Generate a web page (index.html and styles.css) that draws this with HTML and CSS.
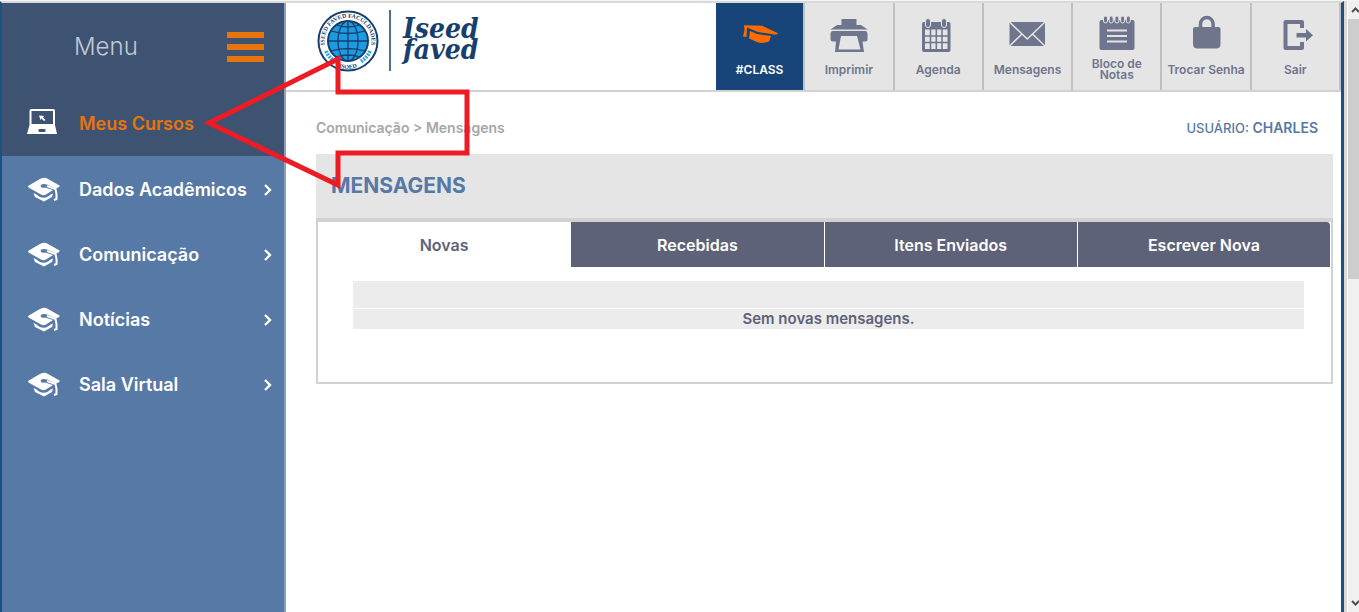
FILE: index.html
```
<!DOCTYPE html>
<html lang="pt-BR">
<head>
<meta charset="utf-8">
<title>Mensagens</title>
<link rel="stylesheet" href="styles.css">
</head>
<body>
<svg class="defs" aria-hidden="true">
  <symbol id="cap" viewBox="0 0 34 28">
    <path d="M1 10 12 3.500Q17 0.500 21 3L32.500 9.500Q33 10.500 32 11L29.500 12.500 20 8.500Q14 7 13.500 10Q14 12.500 18 11.500L26 14 19 18.500Q16.500 20 14 18.500L1.500 11.500Z" fill="#fff"/>
    <path d="M6.500 17Q9 17.500 12 20.500Q17 23 21 20.500Q24 18 26 17.500L25 21 17 25.500 8 21Z" fill="#fff"/>
    <path d="M20 10 28.500 13Q30 18 29.500 23L27 24" fill="none" stroke="#fff" stroke-width="2"/>
  </symbol>
  <symbol id="chevron" viewBox="0 0 10 14"><path d="M2 2 7 7 2 12" fill="none" stroke="#fff" stroke-width="2.400"/></symbol>
</svg>
<div class="window">
  <div class="app">
    <aside class="sidebar">
      <div class="sidebar-top">
        <div class="menu-head">
          <span>Menu</span>
          <button class="burger" aria-label="Abrir menu"><i></i><i></i><i></i></button>
        </div>
        <a class="item active" href="#">
          <svg class="item-icon" viewBox="0 0 34 28"><path d="M4.500 0H26.500Q28 0 28 2V16L30 25H0L2.500 16V2Q2.500 0 4.500 0Z" fill="#fff"/><path d="M4.500 2H26V15H4.500Z" fill="#3e5371"/><path d="M12 6.500 17 7 16 8.500 18.500 11 17 12 14.500 9.500 13.500 11Z" fill="#fff"/><rect x="11.500" y="20" width="7" height="3" rx="1" fill="#3e5371"/></svg>
          <span>Meus Cursos</span>
        </a>
      </div>
      <nav class="sidebar-nav">
        <a class="item" href="#"><svg class="item-icon"><use href="#cap"/></svg><span>Dados Acadêmicos</span><svg class="chevron"><use href="#chevron"/></svg></a>
        <a class="item" href="#"><svg class="item-icon"><use href="#cap"/></svg><span>Comunicação</span><svg class="chevron"><use href="#chevron"/></svg></a>
        <a class="item" href="#"><svg class="item-icon"><use href="#cap"/></svg><span>Notícias</span><svg class="chevron"><use href="#chevron"/></svg></a>
        <a class="item" href="#"><svg class="item-icon"><use href="#cap"/></svg><span>Sala Virtual</span><svg class="chevron"><use href="#chevron"/></svg></a>
      </nav>
    </aside>
    <main class="main">
      <header class="header">
        <svg class="logo" viewBox="0 0 170 66" role="img" aria-label="Iseed Faved">
          <circle cx="32" cy="33" r="29.500" fill="#fff" stroke="#173f6d" stroke-width="2"/>
          <circle cx="32" cy="33" r="20" fill="#1c9be0" stroke="#173f6d" stroke-width="2"/>
          <g fill="none" stroke="#173f6d" stroke-width="1.300"><ellipse cx="32" cy="33" rx="10" ry="20"/><path d="M32 13V53M12 33H52M15 23Q32 28 49 23M15 43Q32 38 49 43M20 17Q32 21 44 17M20 49Q32 45 44 49"/></g>
          <path id="arc-top" d="M9.500 40A23.500 23.500 0 1 1 54.500 40" fill="none"/>
          <path id="arc-bottom" d="M14 54A27 27 0 0 0 50 54" fill="none"/>
          <g class="seal-text"><text><textPath href="#arc-top" startOffset="50%">ISEED FAVED FACULDADES</textPath></text><text><textPath href="#arc-bottom" startOffset="50%">ISOED</textPath></text></g>
          <path d="M10 43Q13 50 20 54M54 43Q51 50 44 54" fill="none" stroke="#2eaade" stroke-width="4" stroke-dasharray="2 1"/>
          <path d="M74 2V63" stroke="#173f6d" stroke-width="1.500"/>
          <text class="logo-text"><tspan x="87" y="30">Iseed</tspan><tspan x="87" y="51">faved</tspan></text>
        </svg>
        <nav class="tools">
          <a class="tool current" href="#"><svg viewBox="0 0 44 44"><path d="M6 13.300 24 13.700 40 21.300 38 22.700 20 20 9 15.500 8.500 25 5 24.500 6.500 18Z" fill="#ff6b00"/><path d="M12 19 19 22 33 24 31 29.500Q24 32 19 30L11 26.500Z" fill="#ff6b00"/></svg><span>#CLASS</span></a>
          <a class="tool" href="#"><svg viewBox="0 0 44 44"><path d="M14.500 7H29.500V13H34L40.500 17.500H3.500L10 13H14.500Z"/><path d="M6 19H38Q40.500 19 40.500 22V27Q40.500 29.500 38 29.500H35.500L37 40H8L9 29.500H6Q3.500 29.500 3.500 27V22Q3.500 19 6 19ZM14 24 11.500 37.500H33.500L30 24Z" fill-rule="evenodd"/></svg><span>Imprimir</span></a>
          <a class="tool" href="#"><svg viewBox="0 0 44 44"><rect x="6" y="10" width="28.500" height="30" rx="2"/><path d="M9 17.500H31.500V37H9Z" fill="#e5e5e5"/><path d="M14.500 17V38M20.300 17V38M26 17V38M9 24H32M9 30.500H32" stroke="#6f758d" stroke-width="1.500"/><g stroke="#e5e5e5"><rect x="9.500" y="6.500" width="5" height="9" rx="2.500"/><rect x="25.500" y="6.500" width="5" height="9" rx="2.500"/></g></svg><span>Agenda</span></a>
          <a class="tool" href="#"><svg viewBox="0 0 44 44"><path d="M4.500 10H40V34H4.500Z"/><path d="M4.500 10 22.300 27 40 10M4.500 34 17 22M40 34 27.500 22" fill="none" stroke="#e5e5e5" stroke-width="1.500"/></svg><span>Mensagens</span></a>
          <a class="tool" href="#"><svg viewBox="0 0 44 44"><rect x="4.500" y="8" width="35" height="30" rx="2"/><g stroke="#e5e5e5"><rect x="8.500" y="4" width="4" height="7" rx="2"/><rect x="14.200" y="4" width="4" height="7" rx="2"/><rect x="19.900" y="4" width="4" height="7" rx="2"/><rect x="25.600" y="4" width="4" height="7" rx="2"/><rect x="31.300" y="4" width="4" height="7" rx="2"/></g><path d="M12 18.500H32M12 24H32M12 29.500H32" stroke="#e5e5e5" stroke-width="2"/></svg><span>Bloco de Notas</span></a>
          <a class="tool" href="#"><svg viewBox="0 0 44 44"><path d="M9 17Q9 15 11 15H34.500Q36.500 15 36.500 17V32Q36.500 36.500 32 36.500H13.500Q9 36.500 9 32Z"/><path d="M16.500 16V12A6.300 6.500 0 0 1 29.100 12V16" fill="none" stroke="#6f758d" stroke-width="3.500"/></svg><span>Trocar Senha</span></a>
          <a class="tool" href="#"><svg viewBox="0 0 44 44"><path d="M29 16V10H12.500V36H29V30" fill="none" stroke="#6f758d" stroke-width="4" stroke-linejoin="round"/><path d="M23.500 21H33V17L40 23.300 33 29.500V25.500H23.500Z"/></svg><span>Sair</span></a>
        </nav>
      </header>
      <div class="content">
        <div class="crumb-row">
          <div class="crumbs">Comunicação &gt; Mensagens</div>
          <div class="user">USUÁRIO: <b>CHARLES</b></div>
        </div>
        <section class="card">
          <h1>MENSAGENS</h1>
          <div class="panel">
            <div class="tabs" role="tablist">
              <button class="tab selected" role="tab" aria-selected="true">Novas</button>
              <button class="tab" role="tab">Recebidas</button>
              <button class="tab" role="tab">Itens Enviados</button>
              <button class="tab" role="tab">Escrever Nova</button>
            </div>
            <table class="messages">
              <thead><tr><th></th></tr></thead>
              <tbody><tr><td>Sem novas mensagens.</td></tr></tbody>
            </table>
          </div>
        </section>
      </div>
    </main>
  </div>
  <div class="scrollbar" aria-hidden="true">
    <svg viewBox="0 0 11 16"><path d="M4 10 7.500 6.500 11 10" /></svg>
    <div class="thumb"></div>
    <svg class="down" viewBox="0 0 11 16"><path d="M4 6 7.500 9.500 11 6" /></svg>
  </div>
</div>
<svg class="pointer" viewBox="0 0 270 140" aria-hidden="true"><path d="M9 73 138 9V42H267V103H138V135Z"/></svg>
</body>
</html>
```
FILE: styles.css
```
* { box-sizing: border-box; }
body {
  margin: 0;
  font-family: Inter, "Liberation Sans", sans-serif;
  font-weight: 600;
  background: #fff;
}
a { color: inherit; text-decoration: none; }
button { border: 0; padding: 0; font: inherit; cursor: pointer; }
.defs { display: none; }

.window {
  display: flex;
  min-height: 100vh;
  border-top: 1px solid #f5f5f5;
}
.app {
  flex: 1;
  display: flex;
  min-width: 0;
  border-top: 2px solid #d9d9d9;
  border-left: 2px solid #1b5180;
  border-right: 3px solid #1b5180;
}

.sidebar {
  flex: 0 0 284px;
  background: #5779a6;
  border-right: 2px solid #8b9fbf;
  color: #fff;
}
.sidebar-top { background: #3e5371; }
.menu-head {
  display: flex;
  align-items: center;
  justify-content: space-between;
  height: 87px;
  padding: 0 20px 0 72px;
  font-size: 24px;
  font-weight: 300;
  color: #c3cad4;
}
.burger {
  display: grid;
  gap: 6px;
  width: 37px;
  background: none;
}
.burger i { height: 6px; background: #e8740c; }
.item {
  display: flex;
  align-items: center;
  height: 66px;
  padding: 0 11px 0 25px;
  font-size: 18px;
}
.item span { flex: 1; white-space: nowrap; }
.item-icon { width: 34px; height: 28px; margin-right: 18px; }
.active { color: #e8740c; }
.sidebar-nav { padding-top: 1px; }
.sidebar-nav .item { height: 65px; }
.chevron { width: 10px; height: 14px; }

.main { flex: 1; min-width: 0; }
.header {
  display: flex;
  justify-content: space-between;
  border-bottom: 2px solid #d2d2d2;
}
.logo { width: 170px; height: 66px; margin: 5px 0 0 30px; }
.seal-text {
  font: bold 6px "Liberation Serif", serif;
  fill: #173f6d;
  text-anchor: middle;
}
.logo-text { font: italic bold 28px "DejaVu Serif Condensed", "DejaVu Serif", serif; fill: #173f6d; }
.tools { flex: 0 0 625px; display: flex; }
.tool {
  flex: 1;
  display: flex;
  flex-direction: column;
  align-items: center;
  height: 87px;
  padding-top: 9px;
  border-right: 2px solid #c0c0c0;
  background: #e5e5e5;
  color: #6f758d;
  font-size: 12px;
  line-height: 11px;
  text-align: center;
}
.tool svg { width: 44px; height: 44px; fill: #6f758d; }
.tool span { display: grid; place-items: center; height: 26px; white-space: nowrap; }
.tool:nth-child(5) span { padding: 0 16px; white-space: normal; }
.current { background: #17457a; color: #fff; }

.content { padding: 22px 8px 0 30px; }
.crumb-row {
  display: flex;
  justify-content: space-between;
  align-items: center;
  height: 26px;
  padding-right: 15px;
  font-size: 14px;
}
.crumbs { color: #a6a6a6; }
.user { color: #5779a6; font-size: 13px; font-weight: 500; }
.user b { font-size: 14px; font-weight: 600; }

.card { margin-top: 14px; }
h1 {
  margin: 0;
  padding-left: 15px;
  font-size: 21px;
  line-height: 64px;
  color: #5779a6;
  background: #e5e5e5;
}
.panel {
  border: 2px solid #d2d2d2;
  border-top-width: 4px;
  padding-bottom: 53px;
}
.tabs { display: grid; grid-template-columns: repeat(4, 1fr); }
.tab {
  height: 45px;
  background: #5e6278;
  color: #fff;
  font-size: 16px;
  border-right: 1px solid #fff;
}
.tab:last-child { border-top-right-radius: 4px; }
.selected { background: #fff; color: #5e6278; }
.messages {
  width: calc(100% - 62px);
  margin: 14px 27px 0 35px;
  border-collapse: collapse;
  color: #5e6278;
  font-size: 15px;
  line-height: 20px;
  text-align: center;
}
.messages th { height: 27px; padding: 0; background: #ececec; border-bottom: 1px solid #fff; }
.messages td { padding: 0; background: #ececec; }

.scrollbar {
  flex: 0 0 15px;
  display: flex;
  flex-direction: column;
  border-left: 3px solid #d9d9d9;
  box-shadow: inset 1px 0 #fff;
  padding-left: 1px;
  background: #f0f0f0;
  background-clip: content-box;
}
.scrollbar svg { width: 11px; height: 18px; fill: none; stroke: #505050; stroke-width: 2; }
.scrollbar .thumb { height: 260px; background: #cdcdcd; }
.scrollbar .down { margin-top: auto; }

.pointer {
  position: absolute;
  left: 200px;
  top: 50px;
  width: 270px;
  height: 140px;
  fill: none;
  stroke: #ed1c24;
  stroke-width: 5;
  pointer-events: none;
}
```
